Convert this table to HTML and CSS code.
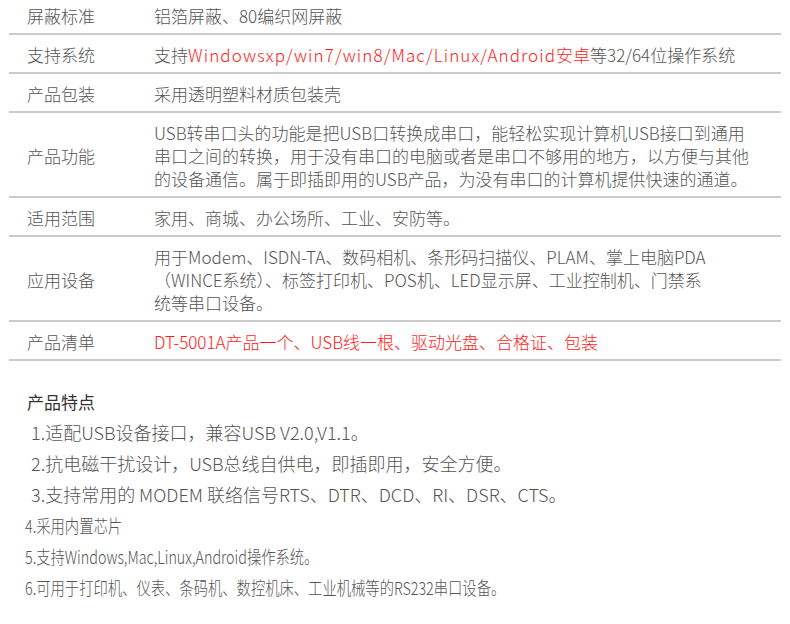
FILE: index.html
```html
<!DOCTYPE html>
<html lang="zh-CN">
<head>
<meta charset="utf-8">
<link rel="stylesheet" href="styles.css">
</head>
<body>
<div class="page">
  <div class="spec">
    <div class="row first">
      <div class="label">屏蔽标准</div>
      <div class="value">铝箔屏蔽、80编织网屏蔽</div>
    </div>
    <div class="row">
      <div class="label">支持系统</div>
      <div class="value">支持<span class="red spaced">Windowsxp/win7/win8/Mac/Linux/Android</span><span class="red">安卓</span>等32/64位操作系统</div>
    </div>
    <div class="row">
      <div class="label">产品包装</div>
      <div class="value">采用透明塑料材质包装壳</div>
    </div>
    <div class="row">
      <div class="label">产品功能</div>
      <div class="value">USB转串口头的功能是把USB口转换成串口，能轻松实现计算机USB接口到通用<br>串口之间的转换，用于没有串口的电脑或者是串口不够用的地方，以方便与其他<br>的设备通信。属于即插即用的USB产品，为没有串口的计算机提供快速的通道。</div>
    </div>
    <div class="row">
      <div class="label">适用范围</div>
      <div class="value">家用、商城、办公场所、工业、安防等。</div>
    </div>
    <div class="row">
      <div class="label">应用设备</div>
      <div class="value">用于Modem、ISDN-TA、数码相机、条形码扫描仪、PLAM、掌上电脑PDA<br>（WINCE系统）、标签打印机、POS机、LED显示屏、工业控制机、门禁系<br>统等串口设备。</div>
    </div>
    <div class="row">
      <div class="label">产品清单</div>
      <div class="value red">DT-5001A产品一个、USB线一根、驱动光盘、合格证、包装</div>
    </div>
  </div>

  <div class="features">
    <h2 class="title">产品特点</h2>
    <ul class="list">
      <li class="item">1.适配USB设备接口，兼容USB V2.0,V1.1。</li>
      <li class="item">2.抗电磁干扰设计，USB总线自供电，即插即用，安全方便。</li>
      <li class="item">3.支持常用的 MODEM 联络信号RTS、DTR、DCD、RI、DSR、CTS。</li>
      <li class="item narrow"><span>4.采用内置芯片</span></li>
      <li class="item narrow"><span>5.支持Windows,Mac,Linux,Android操作系统。</span></li>
      <li class="item narrow"><span>6.可用于打印机、仪表、条码机、数控机床、工业机械等的RS232串口设备。</span></li>
    </ul>
  </div>
</div>
</body>
</html>
```

FILE: styles.css
```css
html, body {
  margin: 0;
  padding: 0;
  background: #fff;
}

.page {
  width: 790px;
  font-family: "Noto Sans CJK SC", "Noto Sans", sans-serif;
  font-weight: 300;
  color: #555;
}

.spec {
  margin: 0 9px;
  display: flex;
  flex-direction: column;
}

.row {
  display: grid;
  grid-template-columns: 127px 1fr;
  align-items: center;
  font-size: 17px;
  line-height: 23px;
  padding: 8px 0 6px;
  border-bottom: 2px solid #cacaca;
}

.row.first {
  padding-top: 4px;
}

.label {
  padding-left: 18px;
  color: #555;
}

.value {
  padding-left: 18px;
  white-space: nowrap;
  color: #555;
}

.red {
  color: #ff1a1a;
}

.spaced {
  letter-spacing: 1.1px;
}

.features {
  padding: 29px 0 0 25px;
}

.title {
  margin: 0;
  padding-left: 2px;
  font-size: 17px;
  line-height: 24px;
  font-weight: 400;
  color: #333;
}

.list {
  list-style: none;
  margin: 3px 0 0;
  padding: 0;
  font-size: 18px;
  line-height: 31px;
  color: #555;
}

.list .item {
  padding-left: 6px;
  white-space: nowrap;
}

.list .item.narrow {
  padding-left: 0;
}

.list .item.narrow span {
  display: inline-block;
  transform: scaleX(0.795);
  transform-origin: left center;
}
```
